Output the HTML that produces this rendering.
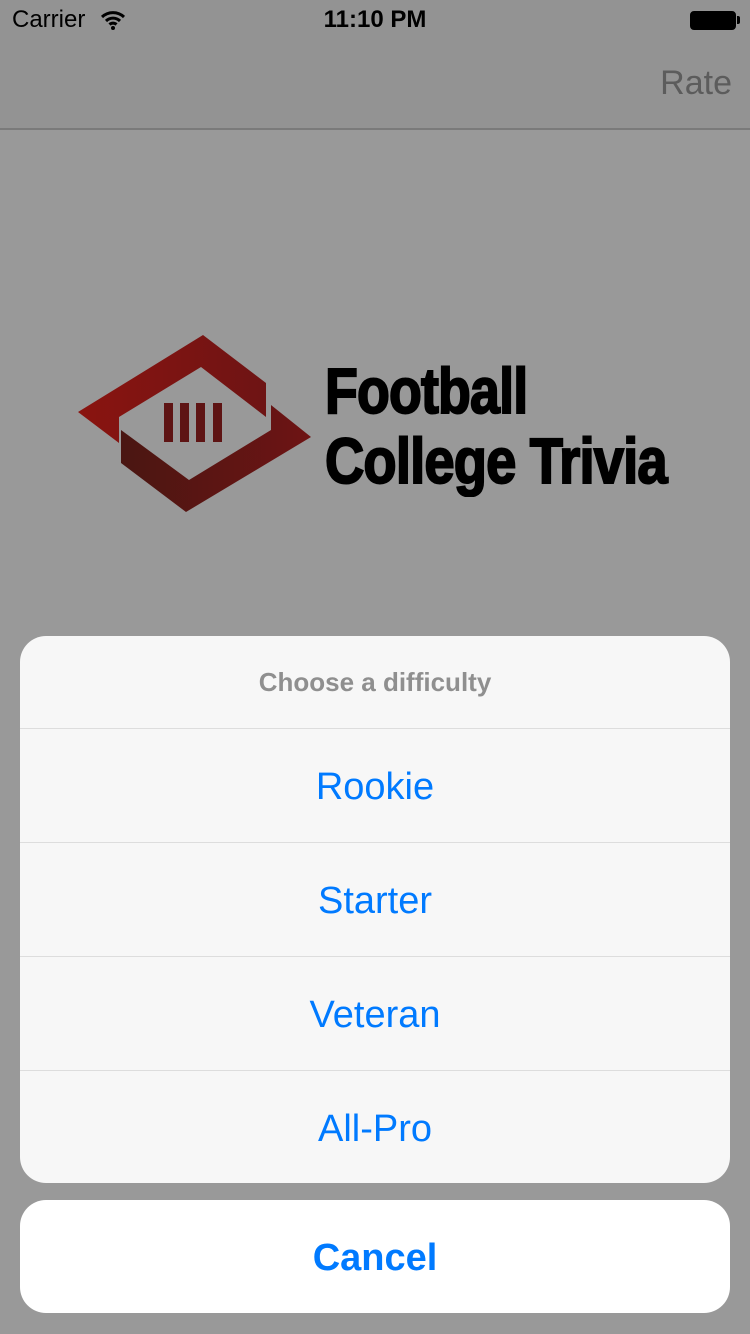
<!DOCTYPE html>
<html><head><meta charset="utf-8"><style>
body{margin:0;width:750px;height:1334px;background:#999;font-family:"Liberation Sans",sans-serif;position:relative;overflow:hidden}
.nav{position:absolute;left:0;top:0;width:750px;height:128px;background:#939393;border-bottom:2px solid #7a7a7a}
.st{position:absolute;top:6px;font-size:24px;color:#000}
.rate{position:absolute;right:18px;top:64px;font-size:34px;color:#5c5c5c}
.logo{position:absolute;left:325px;font-weight:bold;color:#000;transform-origin:0 0;white-space:nowrap;letter-spacing:-1px;-webkit-text-stroke:2px #000}
.sheet{position:absolute;left:20px;top:636px;width:710px;height:547px;background:#f7f7f7;border-radius:26px;overflow:hidden}
.title{height:92px;line-height:92px;text-align:center;font-size:26px;font-weight:bold;color:#8f8f8f;border-bottom:1px solid #ddd}
.row{height:113px;line-height:117px;text-align:center;font-size:38px;color:#007aff;border-bottom:1px solid #ddd}
.cancel{position:absolute;left:20px;top:1200px;width:710px;height:113px;background:#fff;border-radius:26px;line-height:117px;text-align:center;font-size:38px;font-weight:bold;color:#007aff}
</style></head><body>
<div class="nav">
<div class="st" style="left:12px">Carrier</div>
<svg style="position:absolute;left:100px;top:10px" width="26" height="20" viewBox="0 0 26 20"><path d="M2 7a16 16 0 0 1 22 0M6 11a10 10 0 0 1 14 0M9.5 14.5a5 5 0 0 1 7 0" stroke="#000" stroke-width="3" fill="none"/><circle cx="13" cy="18" r="2" fill="#000"/></svg>
<div class="st" style="left:0;width:750px;text-align:center;font-weight:bold">11:10 PM</div>
<div style="position:absolute;left:690px;top:11px;width:44px;height:17px;border:1.5px solid #000;border-radius:4px;background:#000"></div>
<div style="position:absolute;left:737px;top:16px;width:3px;height:8px;background:#000;border-radius:0 2px 2px 0"></div>
<div class="rate">Rate</div>
</div>
<svg style="position:absolute;left:0;top:0" width="750" height="600">
<defs><linearGradient id="g" x1="0" x2="1"><stop offset="0" stop-color="#8a1410"/><stop offset="1" stop-color="#6e1414"/></linearGradient>
<linearGradient id="g2" x1="0" x2="1"><stop offset="0" stop-color="#4a1612"/><stop offset="1" stop-color="#6e1414"/></linearGradient></defs>
<polygon points="78,412 203,335 266,383 266,417 201,367 119,417 119,443" fill="url(#g)"/>
<polygon points="121,430 121,463 186,512 311,437 271,405 271,430 189,480" fill="url(#g2)"/>
<g fill="#5e1414"><rect x="164" y="403" width="9" height="39"/><rect x="180" y="403" width="9" height="39"/><rect x="196" y="403" width="9" height="39"/><rect x="213" y="403" width="9" height="39"/></g>
</svg>
<div class="logo" style="top:354px;font-size:64px;transform:scaleX(0.84)">Football</div>
<div class="logo" style="top:424px;font-size:64px;transform:scaleX(0.85)">College Trivia</div>
<div class="sheet">
<div class="title">Choose a difficulty</div>
<div class="row">Rookie</div>
<div class="row">Starter</div>
<div class="row">Veteran</div>
<div class="row" style="border:none">All-Pro</div>
</div>
<div class="cancel">Cancel</div>
</body></html>
